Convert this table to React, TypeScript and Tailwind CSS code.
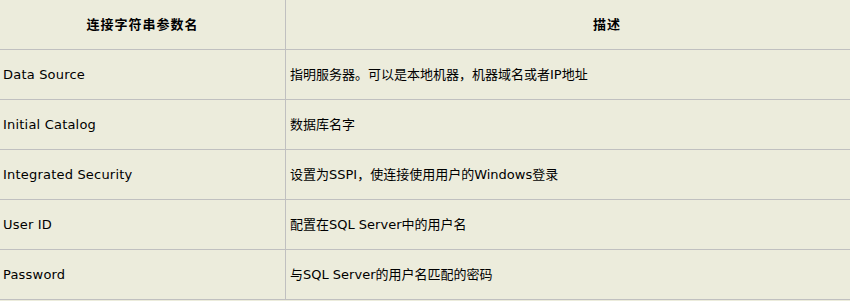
const rows = [
  { name: "Data Source", desc: "指明服务器。可以是本地机器，机器域名或者IP地址" },
  { name: "Initial Catalog", desc: "数据库名字" },
  { name: "Integrated Security", desc: "设置为SSPI，使连接使用用户的Windows登录" },
  { name: "User ID", desc: "配置在SQL Server中的用户名" },
  { name: "Password", desc: "与SQL Server的用户名匹配的密码" },
];

export default function App() {
  return (
    <div
      className="w-[850px] h-[301px] overflow-hidden bg-[#ececdc] text-black text-[13px]"
      style={{ fontFamily: '"DejaVu Sans", "Noto Sans CJK SC", sans-serif' }}
    >
      <div className="w-[928px] grid grid-cols-[286px_1fr]">
        {/* header */}
        <div className="h-[50px] flex items-center justify-center border-b border-r border-[#c0c0c0] font-bold tracking-[1px]">
          连接字符串参数名
        </div>
        <div className="h-[50px] flex items-center justify-center border-b border-[#c0c0c0] font-bold tracking-[1px]">
          描述
        </div>

        {rows.map((r) => (
          <div key={r.name} className="contents">
            <div className="h-[50px] flex items-center pl-[3px] tracking-[0.2px] border-b border-r border-[#c0c0c0]">
              {r.name}
            </div>
            <div className="h-[50px] flex items-center pl-[4px] border-b border-[#c0c0c0]">
              {r.desc}
            </div>
          </div>
        ))}
      </div>
    </div>
  );
}
